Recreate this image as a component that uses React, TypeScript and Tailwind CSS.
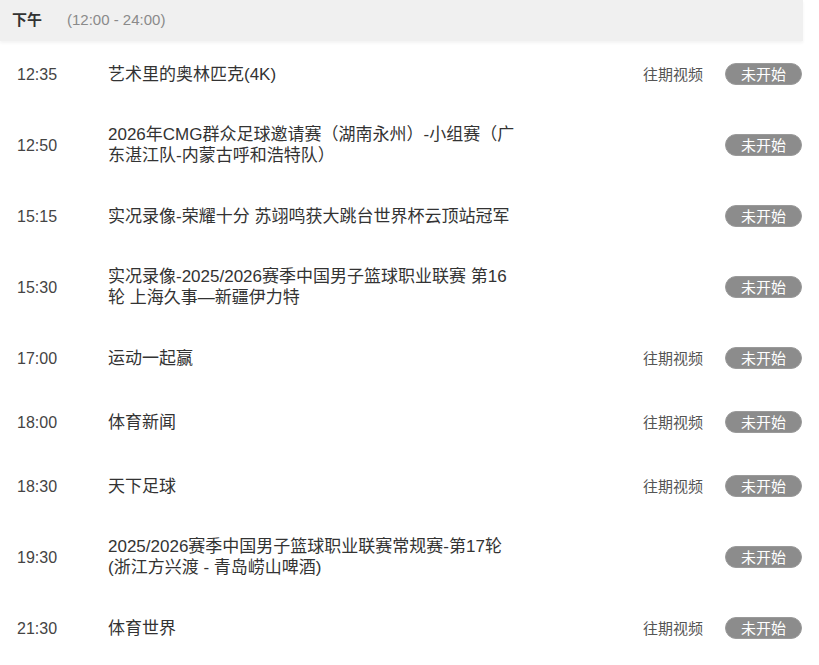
import React from "react";

type Row = { time: string; title: string; past: boolean };

const rows: Row[] = [
  { time: "12:35", title: "艺术里的奥林匹克(4K)", past: true },
  { time: "12:50", title: "2026年CMG群众足球邀请赛（湖南永州）-小组赛（广东湛江队-内蒙古呼和浩特队）", past: false },
  { time: "15:15", title: "实况录像-荣耀十分 苏翊鸣获大跳台世界杯云顶站冠军", past: false },
  { time: "15:30", title: "实况录像-2025/2026赛季中国男子篮球职业联赛 第16轮 上海久事—新疆伊力特", past: false },
  { time: "17:00", title: "运动一起赢", past: true },
  { time: "18:00", title: "体育新闻", past: true },
  { time: "18:30", title: "天下足球", past: true },
  { time: "19:30", title: "2025/2026赛季中国男子篮球职业联赛常规赛-第17轮(浙江方兴渡 - 青岛崂山啤酒)", past: false },
  { time: "21:30", title: "体育世界", past: true },
];

const font = { fontFamily: '"Liberation Sans", "Noto Sans CJK SC", sans-serif' };

export default function App() {
  return (
    <div className="w-[819px] h-[665px] bg-white overflow-hidden" style={font}>
      <div className="w-[803px]">
        <div className="h-[41px] bg-[#f0f0f0] flex items-center shadow-[0_2px_3px_rgba(0,0,0,0.05)]">
          <span className="pl-[12px] w-[67px] text-[15px] font-bold text-[#333]">下午</span>
          <span className="text-[15px] text-[#8a8a8a]">(12:00 - 24:00)</span>
        </div>
        <div className="pt-[1px]">
          {rows.map((r) => (
            <div key={r.time} className="flex items-center py-[18px] min-h-[64px]">
              <div className="w-[108px] pl-[17px] text-[16px] text-[#444] leading-[21px]">{r.time}</div>
              <div className="w-[410px] text-[17px] text-[#333] leading-[21px]">{r.title}</div>
              <div className="ml-auto flex items-center gap-[22px] pr-[1px]">
                {r.past && <span className="text-[15px] text-[#555] leading-[21px]">往期视频</span>}
                <span className="w-[77px] h-[22px] rounded-full bg-[#8c8c8c] border border-[#9a9a9a] text-white text-[15px] flex items-center justify-center leading-none">
                  未开始
                </span>
              </div>
            </div>
          ))}
        </div>
      </div>
    </div>
  );
}
